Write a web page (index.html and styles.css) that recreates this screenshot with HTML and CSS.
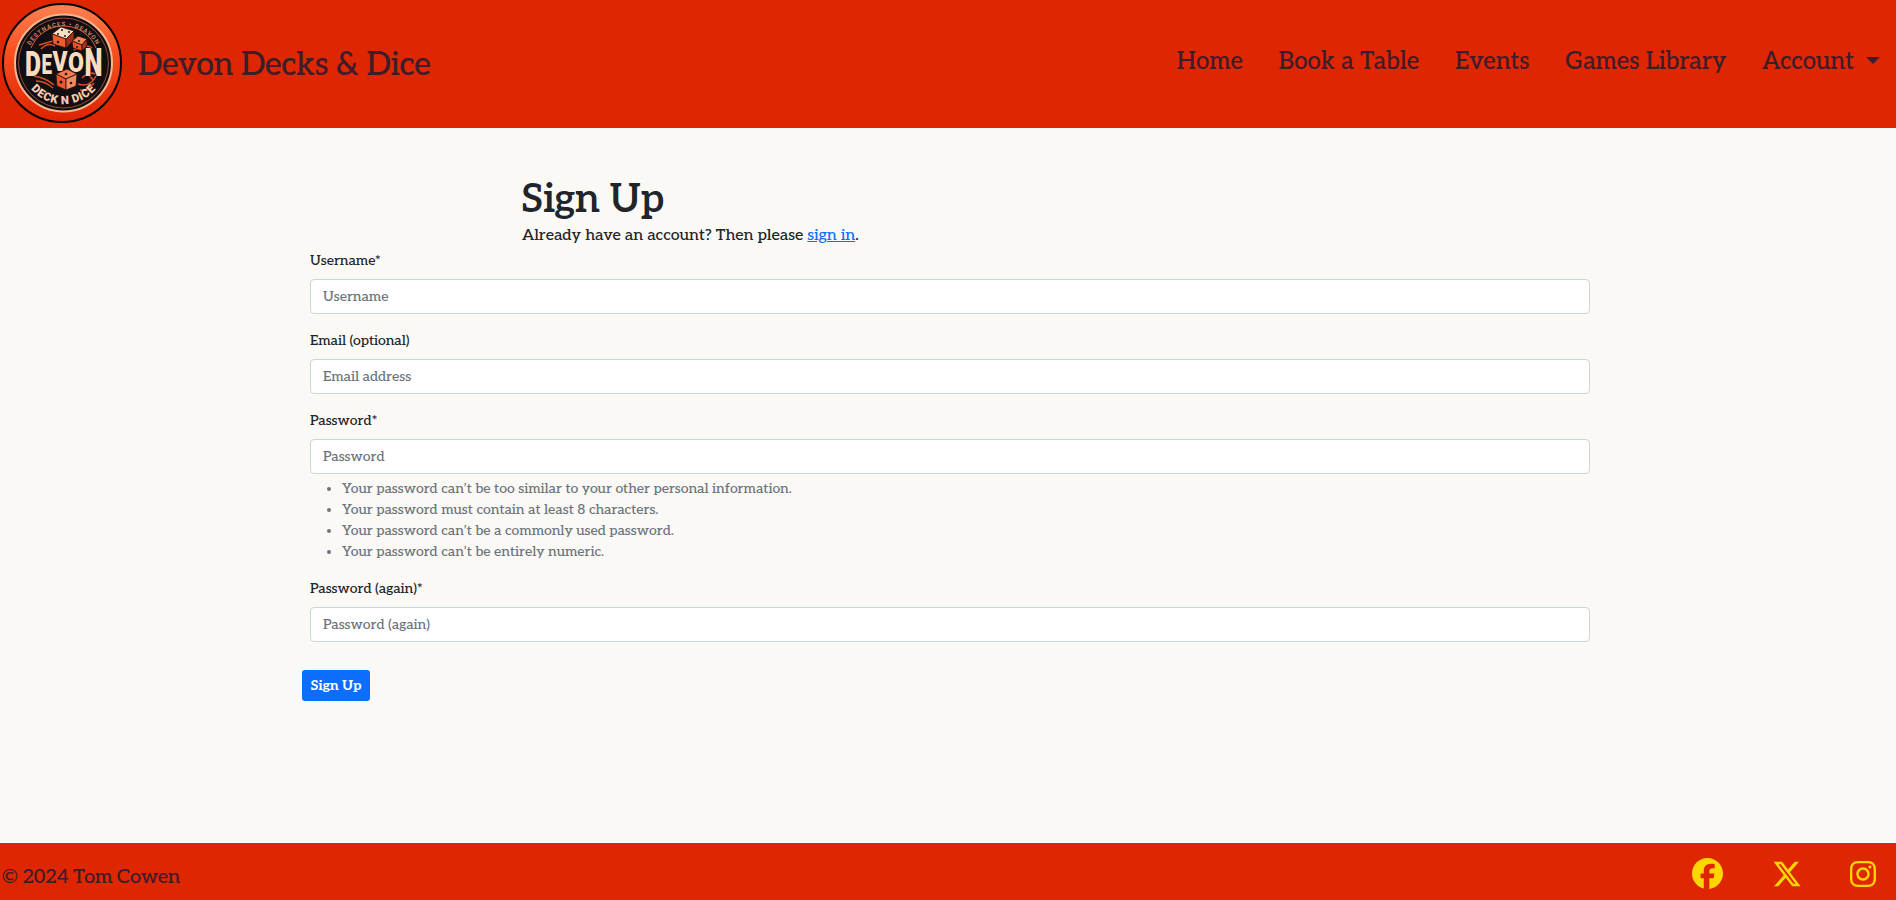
FILE: index.html
```html
<!DOCTYPE html>
<html lang="en">
<head>
<meta charset="utf-8">
<title>Devon Decks &amp; Dice - Sign Up</title>
<link rel="stylesheet" href="styles.css">
</head>
<body>
<header class="site-header">
  <a class="brand" href="#">
    <svg class="logo" viewBox="0 0 124 126" role="img" aria-label="Devon Deck N Dice">
      <defs>
        <linearGradient id="disc" x1="0" y1="0" x2="0" y2="1">
          <stop offset="0" stop-color="#ff8253"/><stop offset=".4" stop-color="#fb4f20"/><stop offset="1" stop-color="#dc2301"/>
        </linearGradient>
        <path id="arc-top" d="M25.500 63a38 38 0 0 1 76 0"/>
        <path id="arc-bottom" d="M20.500 60a43 43 0 0 0 86 0"/>
      </defs>
      <circle cx="62" cy="62" r="59" fill="url(#disc)" stroke="#050505" stroke-width="2"/>
      <circle cx="63.500" cy="62" r="48.500" fill="#120f12" stroke="#f6b892" stroke-width="2"/>
      <circle cx="63.500" cy="62" r="45" fill="none" stroke="#bd5a38" stroke-width=".8"/>
      <path d="M31 47a35 35 0 0 1 65 0" fill="none" stroke="#df6339" stroke-width="1"/>
      <text class="logo-small"><textPath href="#arc-top" startOffset="50%">DESTNACES • DEAVON</textPath></text>
      <g fill="none" stroke="#d8502b" stroke-width="1.600">
        <path d="M41 48q7-7 14-3M39 44l14-4M74 49q9-7 18-2M34 75q12 2 20 9M36 80q9 0 17 7M78 83q12 4 18-8M82 77q7-7 13-4M80 89q8 1 14-7M86 70l7 9"/>
      </g>
      <g stroke="#24100c" stroke-width=".8">
        <path d="M52 33l9-7 13 4-8 8z" fill="#f5dfc5"/><path d="M52 33l14 5v9l-13-4z" fill="#ee5a2b"/><path d="M66 38l8-8v9l-8 8z" fill="#9c3018"/>
        <path d="M72 40l6-5 9 3-5 6z" fill="#f28558"/><path d="M72 40l10 4v6l-9-3z" fill="#ec5127"/><path d="M82 44l5-6v7l-5 5z" fill="#a83318"/>
      </g>
      <g class="logo-name">
        <text x="25" y="75" font-size="35" textLength="16" lengthAdjust="spacingAndGlyphs">D</text>
        <text x="41.500" y="73" font-size="28" textLength="10.500" lengthAdjust="spacingAndGlyphs">E</text>
        <text x="52.500" y="70" font-size="27" textLength="15" lengthAdjust="spacingAndGlyphs">V</text>
        <text x="68" y="71" font-size="27" textLength="16" lengthAdjust="spacingAndGlyphs">O</text>
        <text x="84.500" y="75" font-size="38" textLength="18" lengthAdjust="spacingAndGlyphs">N</text>
      </g>
      <g stroke="#24100c" stroke-width=".8">
        <path d="M56 73l11-5 10 5-11 5z" fill="#f27b4f"/><path d="M56 73l10 5v11l-9-4z" fill="#ed572c"/><path d="M66 78l11-5-1 12-10 4z" fill="#f18a61"/>
      </g>
      <g fill="#27100c"><circle cx="58" cy="33" r="1"/><circle cx="62" cy="29" r="1"/><circle cx="69" cy="31" r="1"/><circle cx="65" cy="35" r="1"/><circle cx="58" cy="41" r="1.200"/><circle cx="79" cy="40" r="1"/><circle cx="77" cy="46" r="1"/><circle cx="66" cy="73" r="1.300"/><circle cx="61" cy="81" r="1.500"/><circle cx="71" cy="82" r="1.300"/></g>
      <text class="logo-bottom"><textPath href="#arc-bottom" startOffset="50%">DECK N DICE</textPath></text>
    </svg>
    <span class="brand-name">Devon Decks &amp; Dice</span>
  </a>
  <nav class="site-nav">
    <a href="#">Home</a>
    <a href="#">Book a Table</a>
    <a href="#">Events</a>
    <a href="#">Games Library</a>
    <a class="dropdown" href="#">Account</a>
  </nav>
</header>
<main class="page">
  <div class="intro">
    <h1>Sign Up</h1>
    <p>Already have an account? Then please <a href="#">sign in</a>.</p>
  </div>
  <form class="signup">
    <div class="field">
      <label for="username">Username*</label>
      <input id="username" type="text" placeholder="Username">
    </div>
    <div class="field">
      <label for="email">Email (optional)</label>
      <input id="email" type="email" placeholder="Email address">
    </div>
    <div class="field">
      <label for="password1">Password*</label>
      <input id="password1" type="password" placeholder="Password">
      <ul class="hints">
        <li>Your password can’t be too similar to your other personal information.</li>
        <li>Your password must contain at least 8 characters.</li>
        <li>Your password can’t be a commonly used password.</li>
        <li>Your password can’t be entirely numeric.</li>
      </ul>
    </div>
    <div class="field">
      <label for="password2">Password (again)*</label>
      <input id="password2" type="password" placeholder="Password (again)">
    </div>
    <button class="submit" type="button">Sign Up</button>
  </form>
</main>
<footer class="site-footer">
  <p>© 2024 Tom Cowen</p>
  <div class="social">
    <a href="#" aria-label="Facebook"><svg width="31" height="31" viewBox="0 0 512 512"><path d="M512 256C512 114.600 397.400 0 256 0S0 114.600 0 256C0 376 82.700 476.800 194.200 504.500V334.200H141.400V256h52.800V222.300c0-87.100 39.400-127.500 125-127.500c16.200 0 44.200 3.200 55.700 6.400V172c-6-.6-16.500-1-29.600-1c-42 0-58.200 15.900-58.200 57.200V256h83.600l-14.400 78.200H287V510.100C413.800 494.800 512 386.900 512 256z"/></svg></a>
    <a href="#" aria-label="X"><svg width="30" height="30" viewBox="0 0 512 512"><path d="M389.200 48h70.600L305.600 224.200 487 464H345L233.700 318.600 106.500 464H35.800L200.700 275.500 26.800 48H172.400L272.900 180.900 389.200 48zM364.400 421.800h39.100L151.100 88h-42L364.400 421.800z"/></svg></a>
    <a href="#" aria-label="Instagram"><svg width="26" height="30" viewBox="0 0 448 512"><path d="M224.100 141c-63.600 0-114.900 51.300-114.900 114.900s51.300 114.900 114.900 114.900S339 319.500 339 255.900 287.700 141 224.100 141zm0 189.600c-41.100 0-74.700-33.500-74.700-74.700s33.500-74.700 74.700-74.700 74.700 33.500 74.700 74.700-33.600 74.700-74.700 74.700zm146.400-194.300c0 14.900-12 26.800-26.800 26.800-14.900 0-26.800-12-26.800-26.800s12-26.800 26.800-26.800 26.800 12 26.800 26.800zm76.100 27.200c-1.700-35.900-9.900-67.700-36.200-93.900-26.200-26.200-58-34.400-93.900-36.200-37-2.100-147.900-2.100-184.900 0-35.800 1.700-67.600 9.900-93.900 36.100s-34.400 58-36.200 93.900c-2.100 37-2.100 147.900 0 184.900 1.700 35.900 9.900 67.700 36.200 93.900s58 34.400 93.900 36.200c37 2.100 147.900 2.100 184.900 0 35.900-1.700 67.700-9.900 93.900-36.200 26.200-26.200 34.400-58 36.200-93.900 2.100-37 2.100-147.800 0-184.800zM398.800 388c-7.800 19.600-22.900 34.700-42.600 42.600-29.500 11.700-99.500 9-132.100 9s-102.700 2.600-132.100-9c-19.600-7.800-34.700-22.900-42.600-42.600-11.700-29.500-9-99.500-9-132.100s-2.600-102.700 9-132.100c7.800-19.600 22.900-34.700 42.600-42.600 29.500-11.700 99.500-9 132.100-9s102.700-2.600 132.100 9c19.600 7.800 34.700 22.900 42.600 42.600 11.700 29.500 9 99.500 9 132.100s2.700 102.700-9 132.100z"/></svg></a>
  </div>
</footer>
</body>
</html>
```

FILE: styles.css
```css
* { box-sizing: border-box; }
body {
  margin: 0;
  min-height: 900px;
  display: flex;
  flex-direction: column;
  font-family: Aleo, "DejaVu Serif Condensed", "DejaVu Serif", serif;
  font-size: 16px;
  font-weight: 500;
  line-height: 1.5;
  color: #212529;
  background: #fbf9f5;
}
.site-header {
  height: 128px;
  padding-right: 16px;
  background: #de2700;
  display: flex;
  align-items: center;
  justify-content: space-between;
}
.brand { display: flex; align-items: center; gap: 14px; color: #3d1d2a; text-decoration: none; }
.logo { width: 124px; height: 126px; }
.logo-name { font-family: Roboto, sans-serif; font-weight: 900; fill: #fbdcc0; stroke: #120f12; stroke-width: 1; paint-order: stroke; }
.logo-small { font: 700 6px Roboto, sans-serif; letter-spacing: 1px; fill: #c98461; text-anchor: middle; }
.logo-bottom { font: 900 11.5px Roboto, sans-serif; letter-spacing: .6px; fill: #f9cdb0; text-anchor: middle; }
.brand-name { padding-top: 2px; font-size: 32px; letter-spacing: -.3px; }
.site-nav { display: flex; gap: 35.700px; padding-bottom: 4px; font-size: 24px; }
.site-nav a { color: #3d1d2a; text-decoration: none; }
.dropdown { display: flex; align-items: center; }
.dropdown::after {
  content: "";
  margin: 0 0 4px 12px;
  border-top: 7px solid;
  border-left: 7px solid transparent;
  border-right: 7px solid transparent;
}
.page { flex: 1; padding: 48px 0 0 310px; }
.intro { padding-left: 212px; }
h1 { margin: 0 0 0 -1px; font-size: 40px; font-weight: 600; line-height: 48px; letter-spacing: -.3px; }
.intro p { margin: 0 0 2px; line-height: 24px; letter-spacing: -.03px; }
.intro a { color: #0d6efd; }
.signup { width: 1280px; font-size: 14px; line-height: 21px; letter-spacing: -.04px; }
.field { margin-bottom: 16px; }
.field label { display: block; margin-bottom: 8px; }
.field input {
  display: block;
  width: 100%;
  height: 35px;
  padding: 6px 12px;
  font: inherit;
  letter-spacing: inherit;
  border: 1px solid #ced4da;
  border-radius: 4px;
  background: #fff;
}
.field input::placeholder { color: #6c757d; opacity: 1; }
.hints { margin: 4px 0 0; padding-left: 32px; color: #6c757d; }
.submit {
  margin: 12px 0 0 -8px;
  width: 68px;
  height: 31px;
  padding: 0;
  border: 0;
  border-radius: 3px;
  background: #0d6efd;
  color: #fff;
  font: 700 14px/21px Aleo, "DejaVu Serif Condensed", serif;
  letter-spacing: -.1px;
}
.site-footer {
  height: 57px;
  padding: 0 20px 0 2px;
  display: flex;
  align-items: center;
  justify-content: space-between;
  background: #de2700;
  color: #3d1d2a;
  font-size: 20px;
  letter-spacing: -.35px;
}
.site-footer p { margin: 10px 0 0; }
.social { display: flex; align-items: center; gap: 48.500px; padding-top: 4px; }
.social a { display: flex; }
.social svg { fill: #ffd700; }
```
